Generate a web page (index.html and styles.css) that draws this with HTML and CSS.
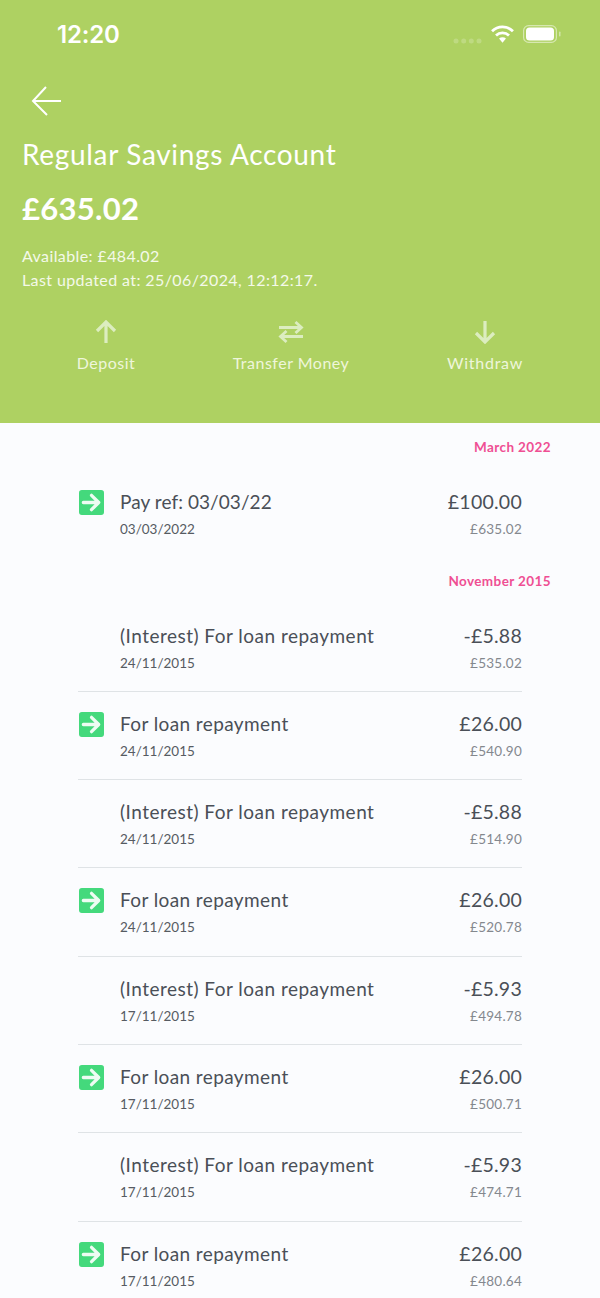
FILE: index.html
```html
<!DOCTYPE html>
<html lang="en">
<head>
<meta charset="utf-8">
<title>Regular Savings Account</title>
<link rel="stylesheet" href="styles.css">
</head>
<body>
<div class="screen">
  <header class="hero">
    <div class="status">
      <span class="time">12:20</span>
      <div class="status-icons">
        <svg class="dots" width="29" height="6" viewBox="0 0 29 6"><g fill="#fff" opacity=".2"><circle cx="3" cy="3" r="2.500"/><circle cx="10.700" cy="3" r="2.500"/><circle cx="18.300" cy="3" r="2.500"/><circle cx="26" cy="3" r="2.500"/></g></svg>
        <svg class="wifi" width="23" height="18" viewBox="0 0 22 17.200"><g fill="none" stroke="#fff" stroke-width="2.600"><path d="M1 6a14 14 0 0 1 20 0"/><path d="M4.800 10a8.800 8.800 0 0 1 12.400 0"/></g><path d="M7.700 13a4.600 4.600 0 0 1 6.600 0L11 17z" fill="#fff"/></svg>
        <svg class="battery" width="38" height="18" viewBox="0 0 38 18"><rect x=".6" y=".6" width="32.800" height="16.800" rx="5" fill="none" stroke="#fff" stroke-opacity=".5" stroke-width="1.200"/><rect x="3" y="2.500" width="28" height="13" rx="3.500" fill="#fff"/><rect x="36" y="6.500" width="1.500" height="5" rx=".7" fill="#fff" fill-opacity=".45"/></svg>
      </div>
    </div>
    <svg class="back" width="32" height="32" viewBox="0 0 32 32"><path d="M30 16H2M15 2 2 16l14 14" fill="none" stroke="#fff" stroke-width="2"/></svg>
    <h1 class="title">Regular Savings Account</h1>
    <p class="balance">£635.02</p>
    <div class="meta">
      <p>Available: £484.02</p>
      <p>Last updated at: 25/06/2024, 12:12:17.</p>
    </div>
    <nav class="actions">
      <div class="action action-a">
        <svg width="24" height="24" viewBox="0 0 24 24"><path d="M12 23V2M3 11l9-9 9 9" fill="none" stroke="#dcedc0" stroke-width="3.200"/></svg>
        <span>Deposit</span>
      </div>
      <div class="action action-b">
        <svg width="26" height="24" viewBox="0 0 26 24"><path d="M1 7.500h22M17.500 2l6 5.500-6 5.500M25 16.500H3M8.500 11l-6 5.500 6 5.500" fill="none" stroke="#dcedc0" stroke-width="2.800"/></svg>
        <span>Transfer Money</span>
      </div>
      <div class="action action-c">
        <svg width="24" height="24" viewBox="0 0 24 24"><path d="M12 1v21M3 13l9 9 9-9" fill="none" stroke="#dcedc0" stroke-width="3.200"/></svg>
        <span>Withdraw</span>
      </div>
    </nav>
  </header>

  <main class="list">
    <h2 class="month">March 2022</h2>
    <div class="row row-first">
      <span class="icon"><svg width="25" height="25" viewBox="0 0 26 26"><rect width="26" height="26" rx="3" fill="#44d97c"/><path d="M4.500 13h16M13 5.500l7.500 7.500-7.500 7.500" fill="none" stroke="#eefcf3" stroke-width="3.400" stroke-linecap="round" stroke-linejoin="round"/></svg></span>
      <div class="main"><div class="name name-ref">Pay ref: 03/03/22</div><div class="date">03/03/2022</div></div>
      <div class="nums"><div class="amount">£100.00</div><div class="running">£635.02</div></div>
    </div>

    <h2 class="month">November 2015</h2>
    <div class="row">
      <span class="icon"></span>
      <div class="main"><div class="name">(Interest) For loan repayment</div><div class="date">24/11/2015</div></div>
      <div class="nums"><div class="amount">-£5.88</div><div class="running">£535.02</div></div>
    </div>
    <div class="row">
      <span class="icon"><svg width="25" height="25" viewBox="0 0 26 26"><rect width="26" height="26" rx="3" fill="#44d97c"/><path d="M4.500 13h16M13 5.500l7.500 7.500-7.500 7.500" fill="none" stroke="#eefcf3" stroke-width="3.400" stroke-linecap="round" stroke-linejoin="round"/></svg></span>
      <div class="main"><div class="name name-short">For loan repayment</div><div class="date">24/11/2015</div></div>
      <div class="nums"><div class="amount">£26.00</div><div class="running">£540.90</div></div>
    </div>
    <div class="row">
      <span class="icon"></span>
      <div class="main"><div class="name">(Interest) For loan repayment</div><div class="date">24/11/2015</div></div>
      <div class="nums"><div class="amount">-£5.88</div><div class="running">£514.90</div></div>
    </div>
    <div class="row">
      <span class="icon"><svg width="25" height="25" viewBox="0 0 26 26"><rect width="26" height="26" rx="3" fill="#44d97c"/><path d="M4.500 13h16M13 5.500l7.500 7.500-7.500 7.500" fill="none" stroke="#eefcf3" stroke-width="3.400" stroke-linecap="round" stroke-linejoin="round"/></svg></span>
      <div class="main"><div class="name name-short">For loan repayment</div><div class="date">24/11/2015</div></div>
      <div class="nums"><div class="amount">£26.00</div><div class="running">£520.78</div></div>
    </div>
    <div class="row">
      <span class="icon"></span>
      <div class="main"><div class="name">(Interest) For loan repayment</div><div class="date">17/11/2015</div></div>
      <div class="nums"><div class="amount">-£5.93</div><div class="running">£494.78</div></div>
    </div>
    <div class="row">
      <span class="icon"><svg width="25" height="25" viewBox="0 0 26 26"><rect width="26" height="26" rx="3" fill="#44d97c"/><path d="M4.500 13h16M13 5.500l7.500 7.500-7.500 7.500" fill="none" stroke="#eefcf3" stroke-width="3.400" stroke-linecap="round" stroke-linejoin="round"/></svg></span>
      <div class="main"><div class="name name-short">For loan repayment</div><div class="date">17/11/2015</div></div>
      <div class="nums"><div class="amount">£26.00</div><div class="running">£500.71</div></div>
    </div>
    <div class="row">
      <span class="icon"></span>
      <div class="main"><div class="name">(Interest) For loan repayment</div><div class="date">17/11/2015</div></div>
      <div class="nums"><div class="amount">-£5.93</div><div class="running">£474.71</div></div>
    </div>
    <div class="row">
      <span class="icon"><svg width="25" height="25" viewBox="0 0 26 26"><rect width="26" height="26" rx="3" fill="#44d97c"/><path d="M4.500 13h16M13 5.500l7.500 7.500-7.500 7.500" fill="none" stroke="#eefcf3" stroke-width="3.400" stroke-linecap="round" stroke-linejoin="round"/></svg></span>
      <div class="main"><div class="name name-short">For loan repayment</div><div class="date">17/11/2015</div></div>
      <div class="nums"><div class="amount">£26.00</div><div class="running">£480.64</div></div>
    </div>
  </main>
</div>
</body>
</html>
```

FILE: styles.css
```css
* { box-sizing: border-box; margin: 0; padding: 0; }
html, body { height: 100%; }
body {
  font-family: "Lato", "Open Sans", sans-serif;
  background: #fbfcfe;
  overflow: hidden;
}
.screen { width: 600px; height: 1298px; overflow: hidden; }

.hero {
  height: 423px;
  background: #aed162;
  color: #fff;
  padding: 0 22px;
  display: flex;
  flex-direction: column;
}
.status {
  height: 68px;
  display: flex;
  justify-content: space-between;
  align-items: center;
  padding: 0 17px 0 35px;
}
.time { font-family: "Inter", sans-serif; font-size: 24px; font-weight: 600; letter-spacing: -.2px; }
.status-icons { display: flex; align-items: center; gap: 9px; }
.dots { margin-top: 13px; }
.back { display: block; margin: 17px 0 0 9px; }
.title { font-size: 28px; font-weight: 400; line-height: 36px; margin-top: 19px; letter-spacing: .67px; }
.balance { font-size: 31px; font-weight: 700; line-height: 40px; margin-top: 16px; letter-spacing: .3px; }
.meta { margin-top: 16px; font-size: 16px; line-height: 24px; letter-spacing: .4px; color: #f4f9e9; }
.actions { flex: 1; display: flex; margin: 28px -22px 0; }
.action {
  display: flex;
  flex-direction: column;
  align-items: center;
  gap: 8px;
  font-size: 16px;
  line-height: 22px;
  letter-spacing: .5px;
  color: #eef6db;
}
.action-a { margin-left: 76px; width: 60px; }
.action-b { margin-left: 96px; width: 118px; }
.action-c { margin-left: 96px; width: 78px; letter-spacing: .75px; }

.list { padding: 0 78px; }
.month {
  font-size: 13.500px;
  font-weight: 700;
  color: #ef4f93;
  line-height: 18px;
  text-align: right;
  margin-right: -29px;
  padding-top: 15px;
  height: 47px;
  letter-spacing: .4px;
}
.row {
  display: flex;
  height: 88.300px;
  border-bottom: 1px solid #dfe3e6;
}
.row:last-child { border-bottom: 0; }
.row-first { border-bottom: 0; height: 86.500px; }
.icon { width: 42px; flex: none; padding: 20px 0 0 1px; }
.icon svg { display: block; }
.main { flex: 1; }
.name { font-size: 19px; line-height: 26px; margin-top: 19px; color: #4a4f57; letter-spacing: .48px; }
.name-short { letter-spacing: .4px; }
.name-ref { letter-spacing: .07px; }
.date { font-size: 13.500px; line-height: 20px; margin-top: 4px; color: #565b62; }
.nums { text-align: right; }
.amount { font-size: 19.500px; line-height: 26px; margin-top: 19px; color: #4a4f57; letter-spacing: .25px; }
.running { font-size: 13.500px; line-height: 20px; margin-top: 4px; color: #84888e; letter-spacing: .25px; }
```
